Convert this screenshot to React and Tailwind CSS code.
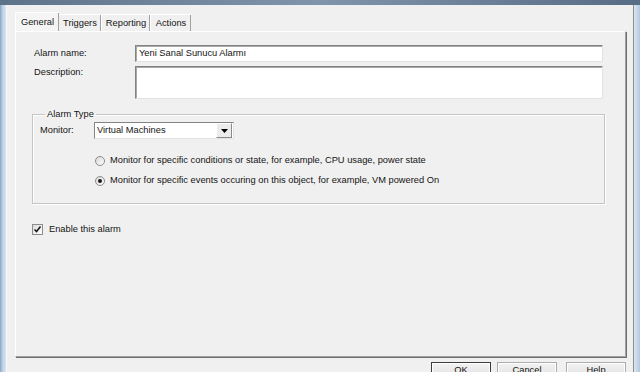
import React from "react";

function Tab({ label, active, className = "" }) {
  return (
    <div
      className={[
        "flex items-center justify-center border-l border-t border-white shadow-[inset_-1px_0_0_#a0a0a0]",
        active ? "h-[19px] bg-[#f4f4f4] -mr-[1px] relative z-10 px-[5px]" : "h-[17px] bg-[#f0f0f0] px-[4px]",
        className,
      ].join(" ")}
    >
      {label}
    </div>
  );
}

function TextBox({ className = "", children }) {
  return (
    <div
      className={[
        "bg-white border-t border-l border-[#838383] border-r border-b border-r-[#e3e3e3] border-b-[#e3e3e3] shadow-[inset_1px_1px_0_#a8a8a8]",
        className,
      ].join(" ")}
    >
      {children}
    </div>
  );
}

function Radio({ checked, children }) {
  return (
    <div className="flex items-center gap-[5px]">
      <div className="w-[10px] h-[10px] rounded-full border border-[#8c8c8c] bg-gradient-to-br from-[#d8d8d8] to-white flex items-center justify-center">
        {checked && <div className="w-[4px] h-[4px] rounded-full bg-[#1a1a1a]" />}
      </div>
      <span>{children}</span>
    </div>
  );
}

export default function App() {
  return (
    <div className="w-[640px] h-[372px] overflow-hidden flex flex-col bg-[#b9cce2] text-[9.3px] leading-[11px] text-[#141414] font-['Liberation_Sans',Arial,sans-serif]">
      {/* title bar bottom */}
      <div className="h-[5px] shrink-0 bg-gradient-to-r from-[#5d7389] via-[#7f95ac] to-[#566d85]" />

      <div className="flex flex-1 min-h-0">
        {/* left frame */}
        <div className="w-[6px] shrink-0 bg-gradient-to-r from-[#8fa6be] via-[#c3d5ea] to-[#d6e3f1]" />

        {/* dialog body */}
        <div className="w-[628px] shrink-0 bg-[#f0f0f0] border-l border-[#f8f8f8] border-r border-r-[#8d8d8d] pl-[8px] pt-[7px] pr-[6px] flex flex-col">
          {/* tabs */}
          <div className="flex items-end ml-[1px]">
            <Tab label="General" active className="-ml-[1px] w-[44px]" />
            <Tab label="Triggers" className="w-[43px]" />
            <Tab label="Reporting" className="w-[49px]" />
            <Tab label="Actions" className="w-[41px]" />
          </div>

          {/* tab panel */}
          <div className="w-[611px] h-[326px] shrink-0 bg-[#f0f0f0] border-l border-t border-white border-r border-b border-r-[#a0a0a0] border-b-[#a0a0a0] shadow-[1px_1px_0_#6f6f6f] pl-[16px] pr-[20px] pt-[13px] flex flex-col">
            <div className="flex items-center pl-[2px] pr-[2px]">
              <span className="w-[101px] shrink-0">Alarm name:</span>
              <TextBox className="flex-1 h-[17px] flex items-center pl-[3px]">Yeni Sanal Sunucu Alarmı</TextBox>
            </div>
            <div className="flex items-start pl-[2px] pr-[2px] mt-[4px]">
              <span className="w-[101px] shrink-0 pt-[1px]">Description:</span>
              <TextBox className="flex-1 h-[33px]" />
            </div>

            <fieldset className="mt-[9px] h-[96px] border border-[#c4c4c4] shadow-[inset_1px_1px_0_#ffffff,1px_1px_0_#ffffff] pl-[7px]">
              <legend className="ml-[5px] px-[2px] leading-[12px]">Alarm Type</legend>
              <div className="flex items-center mt-[2px]">
                <span className="w-[54px] shrink-0">Monitor:</span>
                <div className="w-[140px] h-[17px] bg-white border-t border-l border-[#838383] border-r border-b border-r-[#e3e3e3] border-b-[#e3e3e3] flex items-center">
                  <span className="flex-1 pl-[2px]">Virtual Machines</span>
                  <div className="w-[16px] h-[15px] mr-[1px] bg-[#ececec] border border-t-white border-l-white border-r-[#8a8a8a] border-b-[#8a8a8a] flex items-center justify-center">
                    <svg width="7" height="4" viewBox="0 0 7 4">
                      <path d="M0 0h7L3.5 4z" fill="#000" />
                    </svg>
                  </div>
                </div>
              </div>
              <div className="flex flex-col gap-[9px] pl-[55px] mt-[16px]">
                <Radio>Monitor for specific conditions or state, for example, CPU usage, power state</Radio>
                <Radio checked>Monitor for specific events occuring on this object, for example, VM powered On</Radio>
              </div>
            </fieldset>

            <div className="flex items-center mt-[20px] gap-[6px]">
              <div className="w-[11px] h-[11px] border border-[#8c8c8c] bg-gradient-to-br from-[#dcdcdc] to-white flex items-center justify-center">
                <svg width="9" height="9" viewBox="0 0 9 9">
                  <path d="M1.5 4.5l2 2 4-5" fill="none" stroke="#1a1a1a" strokeWidth="1.6" />
                </svg>
              </div>
              <span>Enable this alarm</span>
            </div>
          </div>

          {/* buttons */}
          <div className="flex justify-end mt-[5px] w-[611px]">
            <button className="w-[60px] h-[22px] border border-[#3c3c3c] bg-gradient-to-b from-[#f2f2f2] to-[#dcdcdc] shadow-[inset_0_0_0_1px_#ffffff] pt-[2px] flex justify-center">OK</button>
            <button className="w-[60px] h-[22px] ml-[6px] border border-[#acacac] bg-gradient-to-b from-[#f2f2f2] to-[#dcdcdc] shadow-[inset_0_0_0_1px_#ffffff] pt-[2px] flex justify-center">Cancel</button>
            <button className="w-[60px] h-[22px] ml-[9px] border border-[#acacac] bg-gradient-to-b from-[#f2f2f2] to-[#dcdcdc] shadow-[inset_0_0_0_1px_#ffffff] pt-[2px] flex justify-center">Help</button>
          </div>
        </div>

        {/* right frame */}
        <div className="flex-1 bg-gradient-to-r from-[#dde6ef] via-[#c7d8ea] to-[#b2c7de]" />
      </div>
    </div>
  );
}
